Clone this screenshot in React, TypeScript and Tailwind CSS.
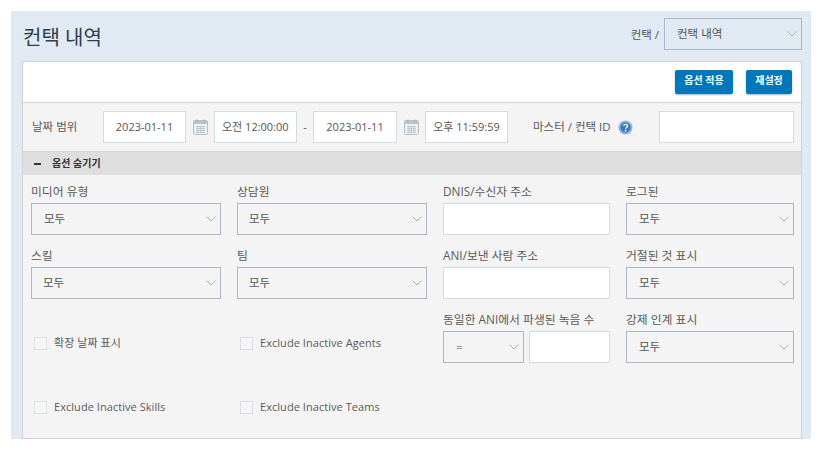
import React from "react";

const font = { fontFamily: '"Open Sans","Noto Sans CJK KR",sans-serif' };

function Chevron() {
  return (
    <svg width="10" height="6" viewBox="0 0 10 6" fill="none">
      <path d="M0.5 0.6 L5 5 L9.5 0.6" stroke="#9fb0bf" strokeWidth="1" />
    </svg>
  );
}

function Select({ value, className = "", pad = "pl-[12px]" }: { value: string; className?: string; pad?: string }) {
  return (
    <div className={`h-[32px] border border-[#a9b9c9] flex items-center justify-between ${pad} pr-[4px] text-[11.5px] text-[#555] ${className}`}>
      <span>{value}</span>
      <Chevron />
    </div>
  );
}

function Input({ className = "", children }: { className?: string; children?: React.ReactNode }) {
  return (
    <div className={`h-[32px] bg-white border border-[#d3dce3] flex items-center justify-center text-[11px] text-[#555] ${className}`}>
      {children}
    </div>
  );
}

function Cal() {
  return (
    <svg width="15" height="16" viewBox="0 0 15 16" className="shrink-0 block">
      <rect x="0.5" y="1.5" width="14" height="14" rx="1" fill="#eef0f1" stroke="#b5c0c8" />
      <rect x="1" y="2" width="13" height="3" fill="#b9c4cc" />
      <path d="M4 0.5v3M11 0.5v3" stroke="#a3afb8" />
      <path d="M3 7.5h9M3 9.5h9M3 11.5h9M3 13.5h9M5 7v7M7.5 7v7M10 7v7" stroke="#b9c2c9" strokeWidth="0.8" />
    </svg>
  );
}

function Field({ label, children }: { label: string; children: React.ReactNode }) {
  return (
    <div className="h-[64px] flex flex-col pt-[8px]">
      <div className="text-[11.8px] leading-[16px] text-[#5a5a5a] whitespace-nowrap">{label}</div>
      <div className="mt-[4px]">{children}</div>
    </div>
  );
}

function Check({ label }: { label: string }) {
  return (
    <div className="h-[64px] flex items-center gap-[7px] pl-[3px] pt-[16px]">
      <div className="w-[13px] h-[13px] border border-[#d8dfe4] bg-[#f6f6f6] shrink-0" />
      <span className="text-[11px] text-[#5a5a5a] whitespace-nowrap tracking-[0.05px]">{label}</span>
    </div>
  );
}

export default function App() {
  return (
    <div className="w-[823px] h-[452px] bg-white overflow-hidden pt-[11px] pl-[11px]" style={font}>
      <div className="w-[800px] h-[428px] bg-[#e1e9f2] flex flex-col overflow-hidden">
        <div className="h-[50px] shrink-0 flex items-start justify-between pl-[12px] pr-[9px]">
          <div className="text-[20px] leading-[28px] text-[#2e3d4d] mt-[13px]">컨택 내역</div>
          <div className="flex items-center mt-[7px]">
            <span className="text-[11.5px] text-[#555] mr-[5px] pt-[2px]">컨택 /</span>
            <Select value="컨택 내역" className="w-[138px] !pl-[12px]" />
          </div>
        </div>
        <div className="ml-[11px] w-[780px] h-[378px] border border-[#cfd3d6] bg-[#f4f4f4] flex flex-col">
          <div className="h-[40px] shrink-0 bg-white flex items-start justify-end gap-[13px] pr-[9px] pt-[8px]">
            <button className="w-[58px] h-[24px] bg-[#0077bb] rounded-[2px] text-white text-[10px] font-bold shadow-[0_1px_2px_rgba(0,0,0,0.3)] pb-[3px]">옵션 적용</button>
            <button className="w-[46px] h-[24px] bg-[#0077bb] rounded-[2px] text-white text-[10px] font-bold shadow-[0_1px_2px_rgba(0,0,0,0.3)] pb-[3px]">재설정</button>
          </div>
          <div className="h-[50px] shrink-0 border-y border-[#cfd3d6] flex items-center pl-[9px] text-[#5a5a5a]">
            <span className="w-[71px] text-[11.5px]">날짜 범위</span>
            <Input className="w-[83px]">2023-01-11</Input>
            <span className="ml-[7px] mr-[6px]"><Cal /></span>
            <Input className="w-[83px] whitespace-nowrap overflow-hidden !justify-start pl-[7px]">오전 12:00:00</Input>
            <span className="w-[16px] text-center text-[11px]">-</span>
            <Input className="w-[84px]">2023-01-11</Input>
            <span className="ml-[7px] mr-[6px]"><Cal /></span>
            <Input className="w-[83px] whitespace-nowrap">오후 11:59:59</Input>
            <span className="ml-[25px] w-[85px] text-[11.5px] whitespace-nowrap">마스터 / 컨택 ID</span>
            <svg width="15" height="15" viewBox="0 0 15 15" className="shrink-0">
              <circle cx="7.5" cy="7.5" r="7" fill="#8fb2dc" />
              <circle cx="7.5" cy="7.5" r="5" fill="#3f78b8" />
              <path d="M5.6 5.9c.2-1 1-1.5 2-1.5s1.9.6 1.9 1.6c0 1.4-1.9 1.4-1.9 2.8" stroke="#fff" strokeWidth="1.3" fill="none" />
              <circle cx="7.6" cy="10.6" r="0.9" fill="#fff" />
            </svg>
            <Input className="w-[135px] ml-[26px]" />
          </div>
          <div className="h-[23px] shrink-0 bg-[#dedede] flex items-center pl-[11px]">
            <span className="w-[7px] h-[2px] bg-[#333]" />
            <span className="ml-[11px] text-[10px] font-bold text-[#333]">옵션 숨기기</span>
          </div>
          <div className="grid grid-cols-[190px_190px_167px_168px] gap-x-[16px] pl-[8px]">
            <Field label="미디어 유형"><Select value="모두" /></Field>
            <Field label="상담원"><Select value="모두" pad="pl-[11px]" /></Field>
            <Field label="DNIS/수신자 주소"><Input /></Field>
            <Field label="로그된"><Select value="모두" /></Field>
            <Field label="스킬"><Select value="모두" pad="pl-[11px]" /></Field>
            <Field label="팀"><Select value="모두" pad="pl-[11px]" /></Field>
            <Field label="ANI/보낸 사람 주소"><Input /></Field>
            <Field label="거절된 것 표시"><Select value="모두" /></Field>
            <Check label="확장 날짜 표시" />
            <Check label="Exclude Inactive Agents" />
            <Field label="동일한 ANI에서 파생된 녹음 수">
              <div className="flex gap-[5px]">
                <Select value="=" className="w-[81px]" />
                <Input className="w-[81px]" />
              </div>
            </Field>
            <Field label="강제 인계 표시"><Select value="모두" /></Field>
            <Check label="Exclude Inactive Skills" />
            <Check label="Exclude Inactive Teams" />
          </div>
        </div>
      </div>
    </div>
  );
}
